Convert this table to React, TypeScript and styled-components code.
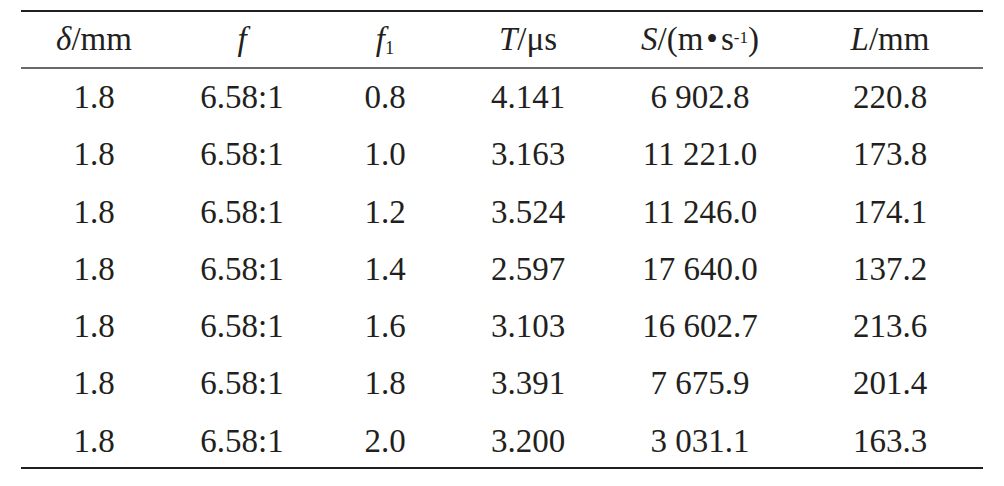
import React from "react";
import styled, { createGlobalStyle } from "styled-components";

const Global = createGlobalStyle`
  html, body { margin: 0; padding: 0; background: #ffffff; }
  body {
    font-family: "Liberation Serif", "Times New Roman", serif;
    color: #231f20;
  }
`;

const Page = styled.div`
  width: 1004px;
  height: 486px;
  overflow: hidden;
  box-sizing: border-box;
  padding: 10px 0 0 21px;
`;

const Table = styled.div`
  width: 962px;
  border-top: 2px solid #231f20;
  border-bottom: 2px solid #231f20;
  font-size: 33px;
`;

const Row = styled.div<{ $height: number; $header?: boolean }>`
  display: grid;
  grid-template-columns: 146px 150px 136px 150px 194px 186px;
  height: ${(p) => p.$height}px;
  line-height: ${(p) => (p.$header ? 55 : 57.3)}px;
  ${(p) => (p.$header ? "border-bottom: 2px solid #6a6a6a;" : "")}
`;

const Cell = styled.div`
  text-align: center;
  white-space: nowrap;
`;

const Var = styled.i`
  font-style: italic;
`;

const Sub = styled.sub`
  font-size: 0.56em;
  vertical-align: -4px;
  line-height: 0;
`;

const Sup = styled.sup`
  font-size: 0.52em;
  vertical-align: 7px;
  line-height: 0;
`;

const Dot = styled.span`
  margin: 0 3px;
`;

const rows: string[][] = [
  ["1.8", "6.58:1", "0.8", "4.141", "6 902.8", "220.8"],
  ["1.8", "6.58:1", "1.0", "3.163", "11 221.0", "173.8"],
  ["1.8", "6.58:1", "1.2", "3.524", "11 246.0", "174.1"],
  ["1.8", "6.58:1", "1.4", "2.597", "17 640.0", "137.2"],
  ["1.8", "6.58:1", "1.6", "3.103", "16 602.7", "213.6"],
  ["1.8", "6.58:1", "1.8", "3.391", "7 675.9", "201.4"],
  ["1.8", "6.58:1", "2.0", "3.200", "3 031.1", "163.3"],
];

export default function App() {
  return (
    <>
      <Global />
      <Page>
        <Table>
          <Row $height={55} $header>
            <Cell>
              <Var>δ</Var>/mm
            </Cell>
            <Cell>
              <Var>f</Var>
            </Cell>
            <Cell>
              <Var>f</Var>
              <Sub>1</Sub>
            </Cell>
            <Cell>
              <Var>T</Var>/μs
            </Cell>
            <Cell>
              <Var>S</Var>/(m<Dot>•</Dot>s<Sup>-1</Sup>)
            </Cell>
            <Cell>
              <Var>L</Var>/mm
            </Cell>
          </Row>
          {rows.map((r, i) => (
            <Row key={i} $height={i === rows.length - 1 ? 54.2 : 57.3}>
              {r.map((v, j) => (
                <Cell key={j}>{v}</Cell>
              ))}
            </Row>
          ))}
        </Table>
      </Page>
    </>
  );
}
